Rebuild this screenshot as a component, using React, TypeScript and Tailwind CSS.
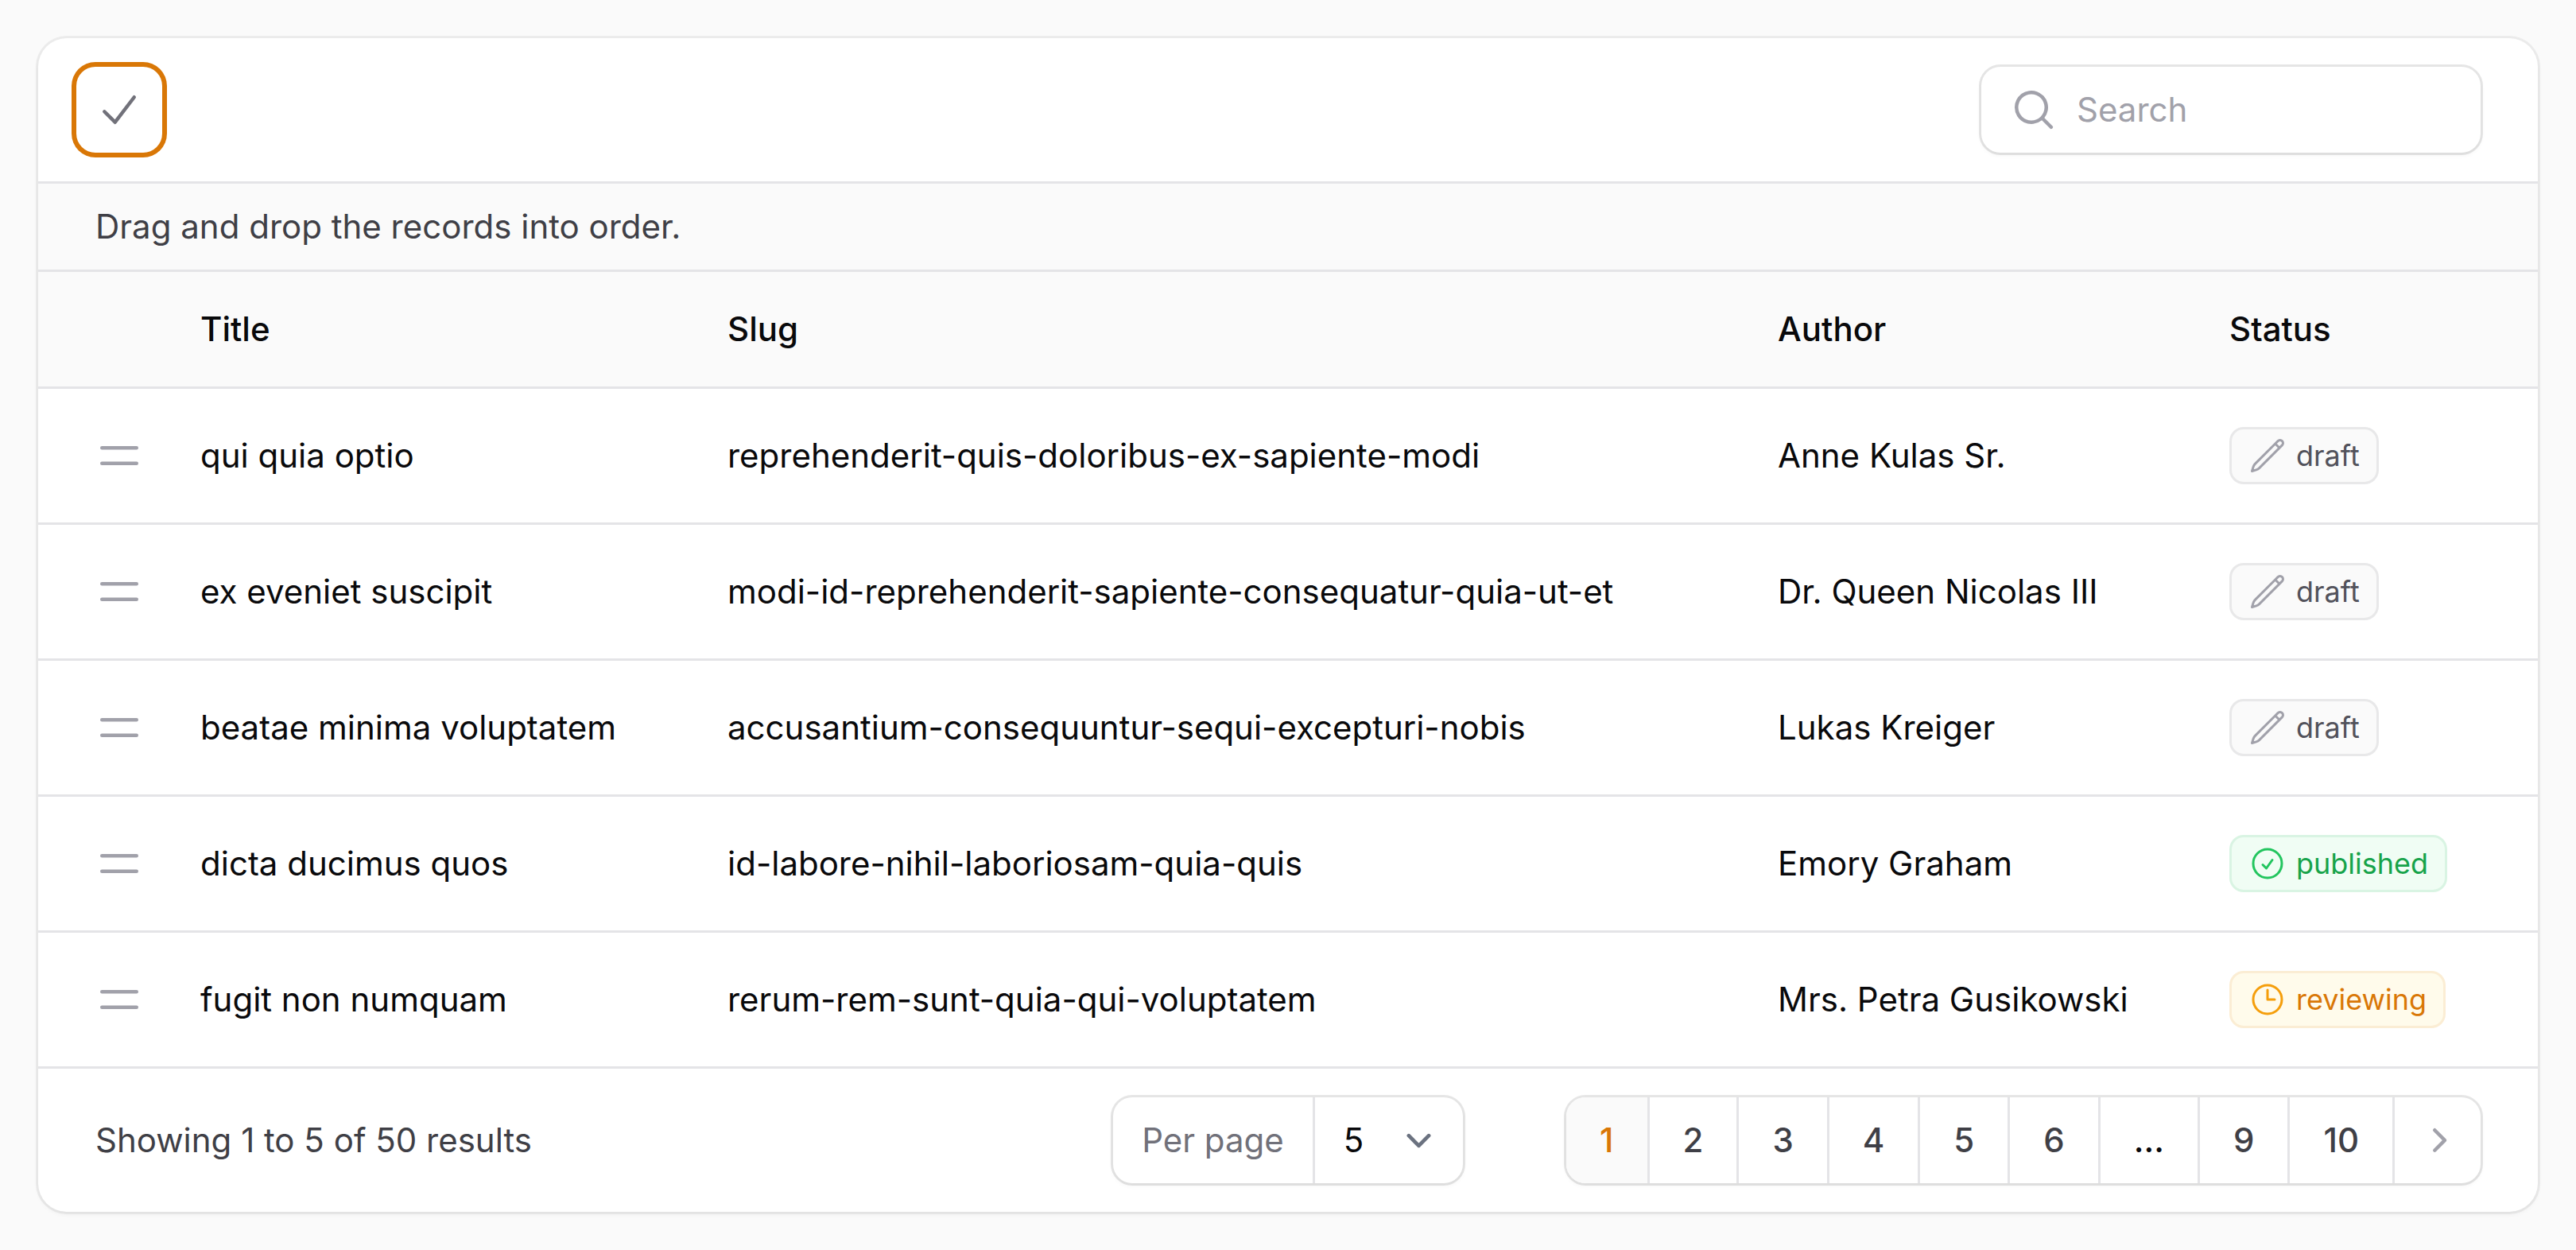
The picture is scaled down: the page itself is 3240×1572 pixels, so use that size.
import type { ReactNode } from "react";

type Status = "draft" | "published" | "reviewing";

interface Post {
  title: string;
  slug: string;
  author: string;
  status: Status;
}

const posts: Post[] = [
  { title: "qui quia optio", slug: "reprehenderit-quis-doloribus-ex-sapiente-modi", author: "Anne Kulas Sr.", status: "draft" },
  { title: "ex eveniet suscipit", slug: "modi-id-reprehenderit-sapiente-consequatur-quia-ut-et", author: "Dr. Queen Nicolas III", status: "draft" },
  { title: "beatae minima voluptatem", slug: "accusantium-consequuntur-sequi-excepturi-nobis", author: "Lukas Kreiger", status: "draft" },
  { title: "dicta ducimus quos", slug: "id-labore-nihil-laboriosam-quia-quis", author: "Emory Graham", status: "published" },
  { title: "fugit non numquam", slug: "rerum-rem-sunt-quia-qui-voluptatem", author: "Mrs. Petra Gusikowski", status: "reviewing" },
];

const pages = ["1", "2", "3", "4", "5", "6", "...", "9", "10"];

const statusStyles: Record<Status, { badge: string; icon: string; path: string }> = {
  draft: {
    badge: "bg-[#fafafa] text-[#52525b] ring-[#52525b]/10",
    icon: "text-[#a1a1aa]",
    path: "m16.862 4.487 1.687-1.688a1.875 1.875 0 1 1 2.652 2.652L6.832 19.82a4.5 4.5 0 0 1-1.897 1.13l-2.685.8.8-2.685a4.5 4.5 0 0 1 1.13-1.897L16.863 4.487Zm0 0L19.5 7.125",
  },
  published: {
    badge: "bg-[#f0fdf4] text-[#16a34a] ring-[#16a34a]/10",
    icon: "text-[#22c55e]",
    path: "M9 12.75 11.25 15 15 9.75M21 12a9 9 0 1 1-18 0 9 9 0 0 1 18 0Z",
  },
  reviewing: {
    badge: "bg-[#fffbeb] text-[#d97706] ring-[#d97706]/10",
    icon: "text-[#f59e0b]",
    path: "M12 6v6h4.5m4.5 0a9 9 0 1 1-18 0 9 9 0 0 1 18 0Z",
  },
};

function MiniIcon({ d, className = "" }: { d: string; className?: string }) {
  return (
    <svg viewBox="0 0 20 20" fill="currentColor" aria-hidden="true" className={`size-15 shrink-0 ${className}`}>
      <path fillRule="evenodd" clipRule="evenodd" d={d} />
    </svg>
  );
}

function StatusBadge({ status }: { status: Status }) {
  const style = statusStyles[status];
  return (
    <span className={`inline-flex items-center gap-3 rounded-[18px] px-6 py-3 text-[36px] leading-[48px] ring-3 ring-inset ${style.badge}`}>
      <svg viewBox="0 0 24 24" fill="none" stroke="currentColor" strokeWidth="1.5" strokeLinecap="round" strokeLinejoin="round" aria-hidden="true" className={`size-12 shrink-0 ${style.icon}`}>
        <path d={style.path} />
      </svg>
      {status}
    </span>
  );
}

function HeaderCell({ children }: { children?: ReactNode }) {
  return <th scope="col" className="border-t-3 border-[#e4e4e7] px-9 py-[42px] text-left leading-[60px] font-medium">{children}</th>;
}

function Cell({ children, className = "px-9" }: { children: ReactNode; className?: string }) {
  return <td className={`border-t-3 border-[#e4e4e7] py-12 ${className}`}>{children}</td>;
}

export default function App() {
  return (
    <div className="min-h-screen bg-[#fafafa] p-12 font-[Inter,sans-serif] text-[42px] leading-[72px] text-[#09090b] antialiased">
      <main className="overflow-hidden rounded-[36px] bg-white shadow-[0_0_0_3px_rgba(9,9,11,0.06),0_3px_6px_rgba(0,0,0,0.05)]">
        <header className="flex items-center justify-between py-9 pr-18 pl-12">
          <button type="button" aria-label="Finish reordering records" className="flex size-27 items-center justify-center rounded-[24px] text-[#71717a] ring-6 ring-[#d97706]">
            <MiniIcon d="M16.704 4.153a.75.75 0 0 1 .143 1.052l-8 10.5a.75.75 0 0 1-1.127.075l-4.5-4.5a.75.75 0 0 1 1.06-1.06l3.894 3.893 7.48-9.817a.75.75 0 0 1 1.05-.143Z" />
          </button>
          <div className="flex h-27 w-[628px] items-center gap-6 rounded-[24px] px-9 shadow-[0_0_0_3px_rgba(9,9,11,0.1),0_3px_6px_rgba(0,0,0,0.05)]">
            <MiniIcon className="text-[#a1a1aa]" d="M9 3.5a5.5 5.5 0 1 0 0 11 5.5 5.5 0 0 0 0-11ZM2 9a7 7 0 1 1 12.452 4.391l3.328 3.329a.75.75 0 1 1-1.06 1.06l-3.329-3.328A7 7 0 0 1 2 9Z" />
            <input type="search" aria-label="Search" placeholder="Search" className="min-w-0 flex-1 bg-transparent outline-none placeholder:text-[#a1a1aa]" />
          </div>
        </header>

        <p className="border-t-3 border-[#e4e4e7] bg-[#fafafa] px-18 py-6 leading-[60px] text-[#3f3f46]">Drag and drop the records into order.</p>

        <table className="w-full table-fixed border-separate border-spacing-0">
          <colgroup>
            <col className="w-[168px]" />
            <col className="w-[663px]" />
            <col />
            <col className="w-[568px]" />
            <col className="w-[424px]" />
          </colgroup>
          <thead className="bg-[#fafafa]">
            <tr>
              <HeaderCell />
              <HeaderCell>Title</HeaderCell>
              <HeaderCell>Slug</HeaderCell>
              <HeaderCell>Author</HeaderCell>
              <HeaderCell>Status</HeaderCell>
            </tr>
          </thead>
          <tbody>
            {posts.map((post) => (
              <tr key={post.slug}>
                <Cell className="pl-18">
                  <button type="button" aria-label={`Reorder ${post.title}`} className="flex h-18 items-center">
                    <MiniIcon className="text-[#a1a1aa]" d="M2 6.75A.75.75 0 0 1 2.75 6h14.5a.75.75 0 0 1 0 1.5H2.75A.75.75 0 0 1 2 6.75Zm0 6.5a.75.75 0 0 1 .75-.75h14.5a.75.75 0 0 1 0 1.5H2.75a.75.75 0 0 1-.75-.75Z" />
                  </button>
                </Cell>
                <Cell>{post.title}</Cell>
                <Cell>{post.slug}</Cell>
                <Cell>{post.author}</Cell>
                <Cell>
                  <div className="flex">
                    <StatusBadge status={post.status} />
                  </div>
                </Cell>
              </tr>
            ))}
          </tbody>
        </table>

        <footer className="grid grid-cols-[1fr_auto_1fr] items-center border-t-3 border-[#e4e4e7] px-18 py-9">
          <p className="text-[#3f3f46]">Showing 1 to 5 of 50 results</p>
          <div className="flex h-27 items-center rounded-[24px] shadow-[0_0_0_3px_rgba(9,9,11,0.1),0_3px_6px_rgba(0,0,0,0.05)]">
            <label htmlFor="per-page" className="flex h-full items-center border-r-3 border-[#e4e4e7] px-9 text-[#71717a]">Per page</label>
            <div className="grid items-center">
              <select id="per-page" defaultValue="5" className="col-start-1 row-start-1 w-[186px] appearance-none bg-transparent pl-9 outline-none">
                <option>5</option>
                <option>10</option>
                <option>25</option>
                <option>50</option>
              </select>
              <svg viewBox="0 0 20 20" fill="none" stroke="#6b7280" strokeWidth="1.5" strokeLinecap="round" strokeLinejoin="round" aria-hidden="true" className="pointer-events-none col-start-1 row-start-1 mr-6 size-[63px] justify-self-end">
                <path d="m6 8 4 4 4-4" />
              </svg>
            </div>
          </div>
          <nav aria-label="Pagination" className="justify-self-end">
            <ol className="flex h-27 divide-x-3 divide-[#e4e4e7] overflow-hidden rounded-[24px] font-medium shadow-[0_0_0_3px_rgba(9,9,11,0.1),0_3px_6px_rgba(0,0,0,0.05)]">
              {pages.map((page) => (
                <li key={page} className="flex">
                  {page === "..." ? (
                    <span className="flex items-center px-[42px]">{page}</span>
                  ) : (
                    <button type="button" aria-current={page === "1" ? "page" : undefined} className={`px-[42px] ${page === "1" ? "bg-[#fafafa] text-[#d97706]" : "text-[#3f3f46]"}`}>{page}</button>
                  )}
                </li>
              ))}
              <li className="flex">
                <button type="button" aria-label="Next" className="px-6 text-[#a1a1aa]">
                  <MiniIcon d="M8.22 5.22a.75.75 0 0 1 1.06 0l4.25 4.25a.75.75 0 0 1 0 1.06l-4.25 4.25a.75.75 0 0 1-1.06-1.06L11.94 10 8.22 6.28a.75.75 0 0 1 0-1.06Z" />
                </button>
              </li>
            </ol>
          </nav>
        </footer>
      </main>
    </div>
  );
}
